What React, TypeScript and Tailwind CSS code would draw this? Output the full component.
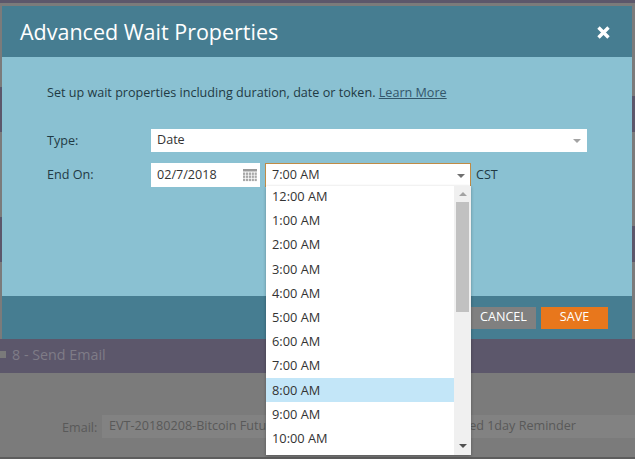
const times = ['12:00 AM', '1:00 AM', '2:00 AM', '3:00 AM', '4:00 AM', '5:00 AM', '6:00 AM', '7:00 AM', '8:00 AM', '9:00 AM', '10:00 AM'];

const Caret = ({ className }: { className: string }) => (
  <span className={`block h-0 w-0 border-x-[4.5px] border-t-[4px] border-x-transparent ${className}`} />
);

const CalendarIcon = () => (
  <svg width="14" height="13" viewBox="0 0 14 13" fill="#a8a8a8">
    <rect x="0" y="0" width="14" height="2.5" fill="#9a9a9a" />
    {[3.5, 6.5, 9.7].map((y) =>
      [0, 2.9, 5.8, 8.7, 11.6].map((x) => <rect key={`${x}-${y}`} x={x} y={y} width="2.2" height="2.4" />),
    )}
  </svg>
);

const TimeDropdown = () => (
  <div className="absolute left-0 top-[22px] z-10 flex h-[269px] w-[205px] bg-white shadow-[0_1px_3px_rgba(0,0,0,0.3)]">
    <div className="-mt-[1.5px] flex-1">
      {times.map((time) => (
        <div
          key={time}
          className={`flex h-[24.2px] items-center pl-[6px] text-[12.8px] text-[#333] ${time === '8:00 AM' ? 'bg-[#c3e6f8]' : ''}`}
        >
          {time}
        </div>
      ))}
    </div>
    <div className="flex w-[17px] flex-col items-center bg-[#f0f0f0]">
      <Caret className="mt-[6px] rotate-180 border-t-[#a3a3a3]" />
      <div className="mt-[6px] h-[110px] w-[13px] bg-[#c1c1c1]" />
      <Caret className="mt-auto mb-[7px] border-t-[#505050]" />
    </div>
  </div>
);

export default function App() {
  return (
    <div
      className="flex h-[459px] w-[635px] flex-col overflow-hidden bg-[#7b7b7b]"
      style={{ fontFamily: '"Open Sans", sans-serif' }}
    >
      <div className="h-[3px] shrink-0 bg-[#5c576b]" />
      <div className="h-[3px] shrink-0 bg-[#7b7b7b]" />

      <div className="flex h-[333px] shrink-0">
        {/* page behind the modal, only a sliver shows on each side */}
        <div className="flex w-[2px] flex-col">
          <div className="mt-[81px] h-[45px] bg-[#5c576b]" />
          <div className="mt-[85px] h-[45px] bg-[#5c576b]" />
        </div>

        <div className="flex flex-1 flex-col bg-[#8ac1d2]">
          <div className="flex h-[51px] items-center justify-between bg-[#467d91] pl-[18px] pr-[22px] pt-[2px] text-white">
            <span className="text-[21.5px]">Advanced Wait Properties</span>
            <svg width="13" height="13" viewBox="0 0 13 13" stroke="white" strokeWidth="3.4">
              <path d="M1.5 1.5 L11.5 11.5 M11.5 1.5 L1.5 11.5" />
            </svg>
          </div>

          <div className="flex-1 px-[45px] text-[12.6px] text-[#1f3a44]">
            <p className="mt-[27px] leading-[18px]">
              Set up wait properties including duration, date or token.{' '}
              <span className="text-[#33566a] underline">Learn More</span>
            </p>
            <div className="mt-[27px] flex h-[23px] items-center">
              <span className="w-[104px] pt-[1px]">Type:</span>
              <div className="flex h-[23px] flex-1 items-center justify-between bg-white px-[6px] text-[#333]">
                Date
                <Caret className="border-t-[#a3a3a3]" />
              </div>
            </div>
            <div className="mt-[11px] flex items-center">
              <span className="w-[104px]">End On:</span>
              <div className="flex h-[24px] w-[109px] items-center justify-between bg-white pl-[6px] pr-[3px] text-[#333]">
                02/7/2018
                <CalendarIcon />
              </div>
              <div className="relative ml-[5px] flex h-[24px] w-[206px] items-center justify-between border border-b-0 border-[#c08b45] bg-white pl-[6px] pr-[5px] text-[#333]">
                7:00 AM
                <Caret className="border-t-[#707070]" />
                <TimeDropdown />
              </div>
              <span className="ml-[5px]">CST</span>
            </div>
          </div>

          <div className="flex h-[43px] items-center justify-end gap-[5px] bg-[#467d91] pr-[24px] text-[12.6px] text-white">
            <div className="flex h-[22px] w-[75px] items-center justify-center bg-[#808080] pl-[10px]">CANCEL</div>
            <div className="flex h-[22px] w-[67px] items-center justify-center bg-[#e8771c]">SAVE</div>
          </div>
        </div>

        <div className="flex w-[3px] flex-col">
          <div className="mt-[90px] h-[36px] bg-[#5c576b]" />
          <div className="mt-[94px] h-[36px] bg-[#5c576b]" />
        </div>
      </div>

      <div className="flex h-[34px] shrink-0 items-center gap-[6px] bg-[#5c576b] pb-[3px] text-[14.3px] text-[#7f7c87]">
        <span className="block h-[7px] w-[6px] bg-[#7a7a7a]" />
        8 - Send Email
      </div>

      <div className="flex h-[84px] shrink-0 items-start pl-[62px] pt-[42px] text-[12.6px] text-[#595959]">
        <span className="w-[40px] pt-[1px] leading-[23px]">Email:</span>
        <div className="flex h-[23px] flex-1 items-center justify-between bg-[#828282] pl-[7px] pr-[59px]">
          <span>EVT-20180208-Bitcoin Futu</span>
          <span>ed 1day Reminder</span>
        </div>
      </div>
      <div className="h-[2px] shrink-0 bg-[#5d5d5d]" />
    </div>
  );
}
